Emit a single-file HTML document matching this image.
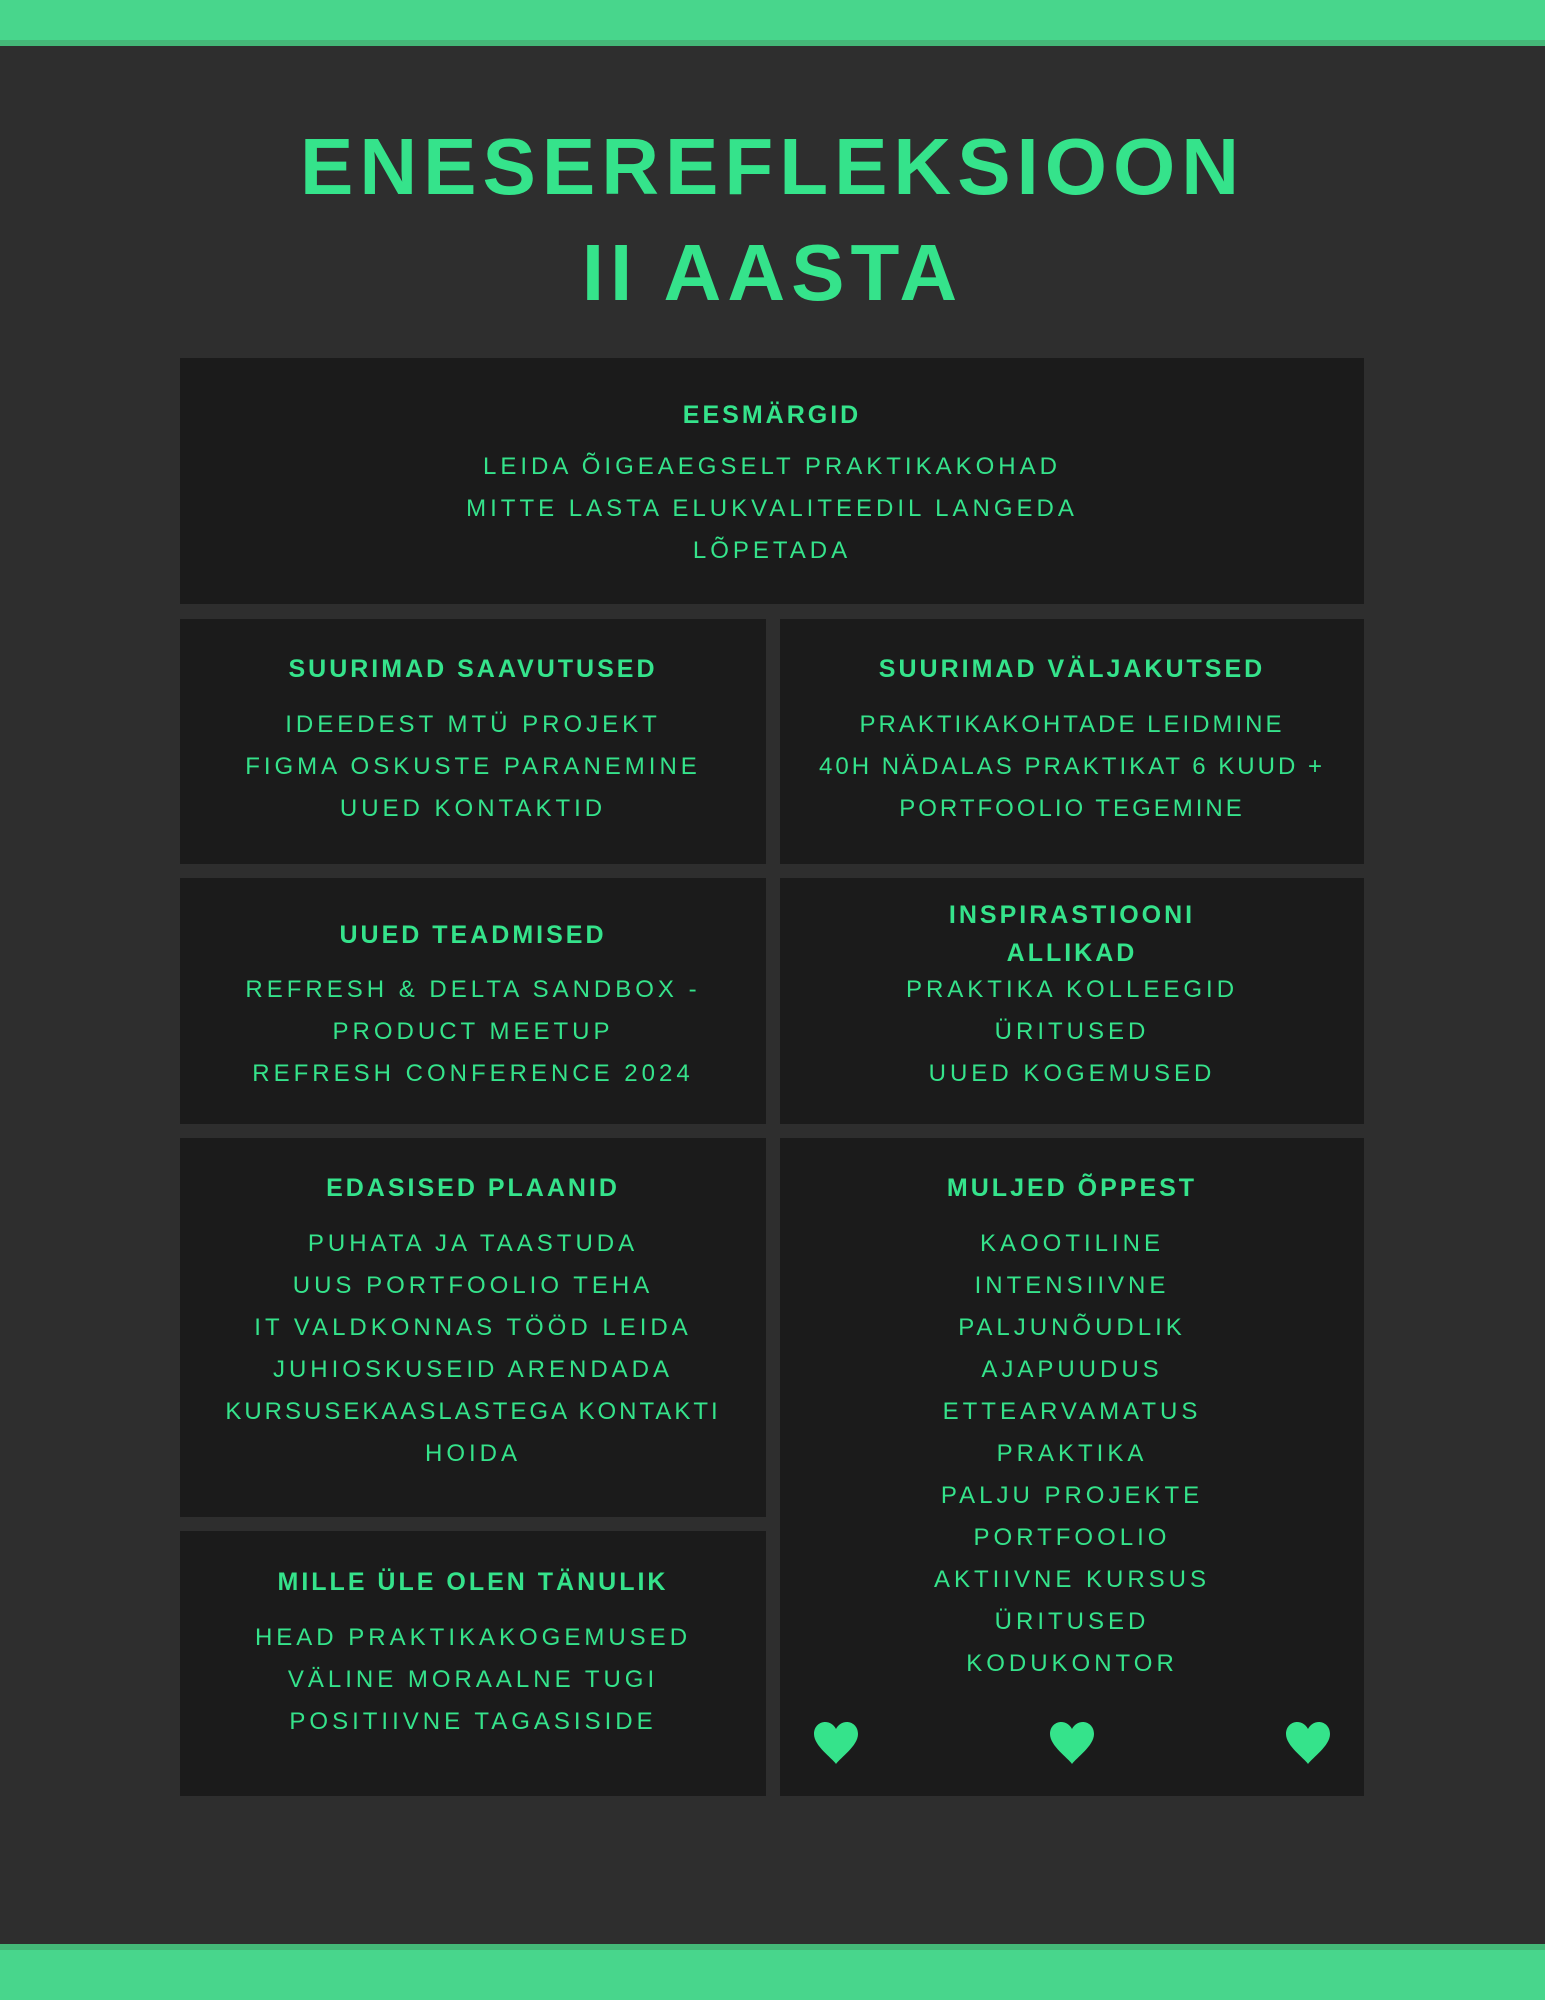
<!DOCTYPE html>
<html><head><meta charset="utf-8"><style>
*{margin:0;padding:0;box-sizing:border-box}
body{width:1545px;height:2000px;background:#2e2e2e;position:relative;overflow:hidden;font-family:"Liberation Sans",sans-serif;color:#35e38b}
.bar{position:absolute;left:0;width:1545px;background:#48d68c}
.title{position:absolute;left:0;width:1545px;text-align:center;font-weight:bold;font-size:80px;letter-spacing:6px;line-height:106px;top:114px}
.box{position:absolute;background:#1b1b1b;text-align:center}
.box h2{font-size:25px;font-weight:bold;letter-spacing:3px;line-height:38px}
.box p{font-size:24px;letter-spacing:4px;line-height:42px}
.heart{position:absolute;width:48px;height:46px}
</style></head><body>
<div class="bar" style="top:0;height:40px"></div>
<div class="bar" style="top:40px;height:6px;background:#44b878"></div>
<div class="title">ENESEREFLEKSIOON<br>II AASTA</div>

<div class="box" style="left:180px;top:358px;width:1184px;height:246px;padding-top:38px">
<h2>EESMÄRGID</h2><p style="margin-top:12px">LEIDA ÕIGEAEGSELT PRAKTIKAKOHAD<br>MITTE LASTA ELUKVALITEEDIL LANGEDA<br>LÕPETADA</p></div>

<div class="box" style="left:180px;top:619px;width:586px;height:245px;padding-top:31px">
<h2>SUURIMAD SAAVUTUSED</h2><p style="margin-top:16px">IDEEDEST MTÜ PROJEKT<br>FIGMA OSKUSTE PARANEMINE<br>UUED KONTAKTID</p></div>
<div class="box" style="left:780px;top:619px;width:584px;height:245px;padding-top:31px">
<h2>SUURIMAD VÄLJAKUTSED</h2><p style="margin-top:16px;letter-spacing:3px">PRAKTIKAKOHTADE LEIDMINE<br>40H NÄDALAS PRAKTIKAT 6 KUUD +<br>PORTFOOLIO TEGEMINE</p></div>

<div class="box" style="left:180px;top:878px;width:586px;height:246px;padding-top:38px">
<h2>UUED TEADMISED</h2><p style="margin-top:15px">REFRESH &amp; DELTA SANDBOX -<br>PRODUCT MEETUP<br>REFRESH CONFERENCE 2024</p></div>
<div class="box" style="left:780px;top:878px;width:584px;height:246px;padding-top:18px">
<h2>INSPIRASTIOONI<br>ALLIKAD</h2><p style="margin-top:-3px">PRAKTIKA KOLLEEGID<br>ÜRITUSED<br>UUED KOGEMUSED</p></div>

<div class="box" style="left:180px;top:1138px;width:586px;height:379px;padding-top:31px">
<h2>EDASISED PLAANID</h2><p style="margin-top:16px">PUHATA JA TAASTUDA<br>UUS PORTFOOLIO TEHA<br>IT VALDKONNAS TÖÖD LEIDA<br>JUHIOSKUSEID ARENDADA<br><span style="letter-spacing:3px">KURSUSEKAASLASTEGA KONTAKTI</span><br>HOIDA</p></div>
<div class="box" style="left:180px;top:1531px;width:586px;height:265px;padding-top:32px">
<h2>MILLE ÜLE OLEN TÄNULIK</h2><p style="margin-top:16px">HEAD PRAKTIKAKOGEMUSED<br>VÄLINE MORAALNE TUGI<br>POSITIIVNE TAGASISIDE</p></div>

<div class="box" style="left:780px;top:1138px;width:584px;height:658px;padding-top:31px">
<h2>MULJED ÕPPEST</h2><p style="margin-top:16px">KAOOTILINE<br>INTENSIIVNE<br>PALJUNÕUDLIK<br>AJAPUUDUS<br>ETTEARVAMATUS<br>PRAKTIKA<br>PALJU PROJEKTE<br>PORTFOOLIO<br>AKTIIVNE KURSUS<br>ÜRITUSED<br>KODUKONTOR</p></div>

<svg class="heart" style="left:812px;top:1720px" viewBox="0 0 24 23"><path d="M12 22 C10 19 1 13 1 7 C1 3 4 1 6.5 1 C9 1 11 2.5 12 4.5 C13 2.5 15 1 17.5 1 C20 1 23 3 23 7 C23 13 14 19 12 22Z" fill="#35e38b"/></svg>
<svg class="heart" style="left:1048px;top:1720px" viewBox="0 0 24 23"><path d="M12 22 C10 19 1 13 1 7 C1 3 4 1 6.5 1 C9 1 11 2.5 12 4.5 C13 2.5 15 1 17.5 1 C20 1 23 3 23 7 C23 13 14 19 12 22Z" fill="#35e38b"/></svg>
<svg class="heart" style="left:1284px;top:1720px" viewBox="0 0 24 23"><path d="M12 22 C10 19 1 13 1 7 C1 3 4 1 6.5 1 C9 1 11 2.5 12 4.5 C13 2.5 15 1 17.5 1 C20 1 23 3 23 7 C23 13 14 19 12 22Z" fill="#35e38b"/></svg>

<div class="bar" style="top:1944px;height:6px;background:#44b878"></div>
<div class="bar" style="top:1950px;height:50px"></div>
</body></html>
